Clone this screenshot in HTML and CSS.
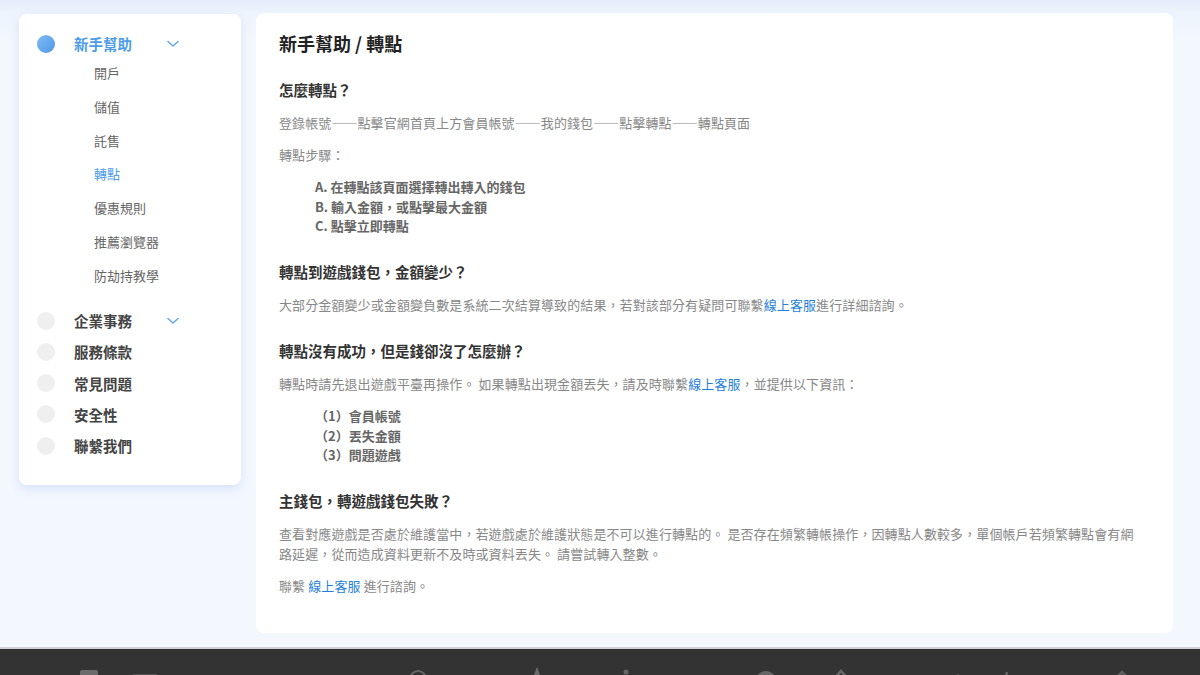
FILE: index.html
```html
<!DOCTYPE html>
<html lang="zh-Hant">
<head>
<meta charset="utf-8">
<title>新手幫助 / 轉點</title>
<link rel="stylesheet" href="styles.css">
</head>
<body>
<div class="page">
  <aside class="sidebar">
    <div class="group active">
      <span class="dot"></span>
      <span class="label">新手幫助</span>
      <svg class="chev" width="12" height="8" viewBox="0 0 12 8"><path d="M1 1.5 L6 6 L11 1.5" fill="none" stroke="#6aa9ec" stroke-width="1.6" stroke-linecap="round" stroke-linejoin="round"/></svg>
    </div>
    <ul class="sub">
      <li>開戶</li>
      <li>儲值</li>
      <li>託售</li>
      <li class="on">轉點</li>
      <li>優惠規則</li>
      <li>推薦瀏覽器</li>
      <li>防劫持教學</li>
    </ul>
    <div class="group first-after">
      <span class="dot"></span>
      <span class="label">企業事務</span>
      <svg class="chev" width="12" height="8" viewBox="0 0 12 8"><path d="M1 1.5 L6 6 L11 1.5" fill="none" stroke="#6aa9ec" stroke-width="1.6" stroke-linecap="round" stroke-linejoin="round"/></svg>
    </div>
    <div class="group"><span class="dot"></span><span class="label">服務條款</span></div>
    <div class="group"><span class="dot"></span><span class="label">常見問題</span></div>
    <div class="group"><span class="dot"></span><span class="label">安全性</span></div>
    <div class="group"><span class="dot"></span><span class="label">聯繫我們</span></div>
  </aside>

  <main class="content">
    <h1 class="title">新手幫助 / 轉點</h1>

    <h3 class="q q-first">怎麼轉點？</h3>
    <p class="a">登錄帳號——點擊官網首頁上方會員帳號——我的錢包——點擊轉點——轉點頁面</p>
    <p class="a">轉點步驟：</p>
    <ul class="steps">
      <li>A. 在轉點該頁面選擇轉出轉入的錢包</li>
      <li>B. 輸入金額，或點擊最大金額</li>
      <li>C. 點擊立即轉點</li>
    </ul>

    <h3 class="q">轉點到遊戲錢包，金額變少？</h3>
    <p class="a">大部分金額變少或金額變負數是系統二次結算導致的結果，若對該部分有疑問可聯繫<a class="link">線上客服</a>進行詳細諮詢。</p>

    <h3 class="q">轉點沒有成功，但是錢卻沒了怎麼辦？</h3>
    <p class="a">轉點時請先退出遊戲平臺再操作。 如果轉點出現金額丟失，請及時聯繫<a class="link">線上客服</a>，並提供以下資訊：</p>
    <ul class="steps">
      <li>（1）會員帳號</li>
      <li>（2）丟失金額</li>
      <li>（3）問題遊戲</li>
    </ul>

    <h3 class="q">主錢包，轉遊戲錢包失敗？</h3>
    <p class="a">查看對應遊戲是否處於維護當中，若遊戲處於維護狀態是不可以進行轉點的。 是否存在頻繁轉帳操作，因轉點人數較多，單個帳戶若頻繁轉點會有網路延遲，從而造成資料更新不及時或資料丟失。 請嘗試轉入整數。</p>
    <p class="a">聯繫 <a class="link">線上客服</a> 進行諮詢。</p>
  </main>
</div>

<footer class="footer">
  <div class="icons">
    <svg class="ic i1" width="22" height="22" viewBox="0 0 22 22"><rect x="2" y="2" width="18" height="18" rx="2" fill="#6b6b6b"/></svg>
    <svg class="ic i2" width="30" height="22" viewBox="0 0 30 22"><rect x="2" y="6" width="26" height="10" rx="2" fill="#555"/></svg>
    <svg class="ic i3" width="20" height="22" viewBox="0 0 20 22"><circle cx="10" cy="11" r="8" fill="none" stroke="#666" stroke-width="2"/></svg>
    <svg class="ic i4" width="18" height="22" viewBox="0 0 18 22"><path d="M3 20 L9 2 L15 20" fill="none" stroke="#6a6a6a" stroke-width="2.5"/></svg>
    <svg class="ic i5" width="20" height="22" viewBox="0 0 20 22"><circle cx="7" cy="4" r="2.5" fill="#666"/><path d="M6 20 V10 h8" fill="none" stroke="#666" stroke-width="2.5"/></svg>
    <svg class="ic i6" width="24" height="22" viewBox="0 0 24 22"><path d="M2 12 a10 9 0 0 1 20 0 V20 H2 Z" fill="#666"/></svg>
    <svg class="ic i7" width="20" height="22" viewBox="0 0 20 22"><path d="M2 12 L10 3 L18 12" fill="none" stroke="#666" stroke-width="2.5"/></svg>
    <svg class="ic i8" width="8" height="22" viewBox="0 0 8 22"><rect x="3" y="6" width="2" height="14" fill="#555"/></svg>
    <svg class="ic i9" width="12" height="22" viewBox="0 0 12 22"><path d="M4 20 L8 4" stroke="#666" stroke-width="2.5"/></svg>
    <svg class="ic i10" width="20" height="22" viewBox="0 0 20 22"><path d="M2 14 L12 4 L18 10" fill="none" stroke="#5e5e5e" stroke-width="2.5"/></svg>
  </div>
</footer>
</body>
</html>
```

FILE: styles.css
```css
* { box-sizing: border-box; }
html, body { margin: 0; padding: 0; }
body {
  font-family: "Noto Sans CJK TC", "Noto Sans", "Liberation Sans", sans-serif;
  background: linear-gradient(#e4edfb 0px, #eef4fd 14px, #f3f7fe 40px, #f3f7fe 100%);
  color: #333;
}
ul { list-style: none; margin: 0; padding: 0; }
h1, h3, p { margin: 0; }

.page {
  display: flex;
  align-items: flex-start;
  gap: 15px;
  padding: 13px 27px 14px 19px;
}

/* sidebar */
.sidebar {
  flex: 0 0 222px;
  margin-top: 1px;
  background: #fff;
  border-radius: 8px;
  box-shadow: 0 4px 10px rgba(120, 160, 230, 0.22);
  padding: 14px 0 24px 18px;
}
.group {
  display: flex;
  align-items: center;
  height: 31.2px;
}
.dot {
  width: 18px;
  height: 18px;
  border-radius: 50%;
  background: #efefef;
  flex: 0 0 18px;
}
.group.active .dot {
  background: linear-gradient(135deg, #7fbcf5, #4f97e6);
}
.label {
  margin-left: 19px;
  width: 93px;
  font-size: 14.5px;
  font-weight: 700;
  color: #444;
  white-space: nowrap;
}
.group.active .label { color: #4b9ce9; }
.chev { display: block; margin-top: 1px; }
.sub {
  margin-top: -3.1px;
  padding-left: 57px;
}
.sub li {
  height: 33.8px;
  line-height: 33.8px;
  font-size: 13px;
  color: #666;
}
.sub li.on { color: #4b9ce9; }
.first-after { margin-top: 12.5px; }

/* main content */
.content {
  flex: 1 1 auto;
  background: #fff;
  border-radius: 8px;
  padding: 18px 30px 38px 23px;
}
.title {
  font-size: 18px;
  line-height: 24px;
  font-weight: 700;
  color: #222;
}
.q {
  font-size: 14.5px;
  line-height: 20px;
  font-weight: 700;
  color: #333;
  margin-top: 26.5px;
}
.q.q-first { margin-top: 25px; }
.a {
  font-size: 13px;
  line-height: 19.5px;
  color: #888;
  margin-top: 12.5px;
  letter-spacing: 0.1px;
}
.q + .a { margin-top: 13px; }
.steps {
  margin-top: 12.5px;
  padding-left: 36px;
}
.steps li {
  font-size: 13px;
  line-height: 19.5px;
  font-weight: 700;
  color: #666;
}
.link { color: #1f7fdb; cursor: pointer; }

/* footer */
.footer {
  border-top: 2px solid #cfd1d4;
  background: #333;
  height: 120px;
}
.icons {
  display: flex;
  align-items: flex-start;
  padding-top: 19px;
}
.ic { display: block; flex: 0 0 auto; }
.i1 { margin-left: 78px; }
.i2 { margin-left: 30px; }
.i3 { margin-left: 248px; }
.i4 { margin-left: 100px; }
.i5 { margin-left: 73px; }
.i6 { margin-left: 115px; }
.i7 { margin-left: 53px; }
.i8 { margin-left: 103px; }
.i9 { margin-left: 37px; }
.i10 { margin-left: 99px; }
```
